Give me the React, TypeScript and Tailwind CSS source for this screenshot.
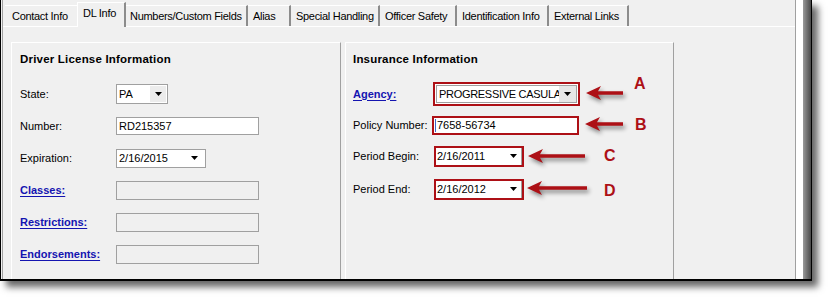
import React from 'react'

const tabs = [
  { label: 'Contact Info', cls: 'w-[72px] pl-[7px]' },
  { label: 'DL Info', cls: 'w-[49px] pl-[5px]', active: true },
  { label: 'Numbers/Custom Fields', cls: 'w-[122px] pl-[4px]' },
  { label: 'Alias', cls: 'w-[43px] pl-[5px]' },
  { label: 'Special Handling', cls: 'w-[89px] pl-[5px]' },
  { label: 'Officer Safety', cls: 'w-[77px] pl-[5px]' },
  { label: 'Identification Info', cls: 'w-[92px] pl-[5px]' },
  { label: 'External Links', cls: 'w-[80px] pl-[5px]' },
]

const DownTriangle = () => (
  <svg width="7" height="4" viewBox="0 0 7 4">
    <path d="M0 0h7L3.5 4z" fill="#000" />
  </svg>
)

// red call-out arrow pointing left
const Arrow = ({ width }: { width: number }) => (
  <svg
    width={width}
    height={14}
    viewBox={`0 0 ${width} 14`}
    className="drop-shadow-[2px_3px_2px_rgba(0,0,0,0.45)] shrink-0"
  >
    <path d={`M0 7 L15 0 L12 5.2 L${width} 5.2 L${width} 8.8 L12 8.8 L15 14 Z`} fill="#ad1016" />
  </svg>
)

const Letter = ({ children, className = '' }: { children: React.ReactNode; className?: string }) => (
  <span className={`text-[16px] leading-[16px] font-bold text-[#ad1016] ${className}`}>{children}</span>
)

const Label = ({ children, link = false, w }: { children: React.ReactNode; link?: boolean; w: string }) => (
  <div className={`${w} shrink-0`}>
    {link ? (
      <span className="font-bold text-[#1414b0] underline underline-offset-[2px]">{children}</span>
    ) : (
      <span>{children}</span>
    )}
  </div>
)

export default function App() {
  return (
    <div className="w-[832px] h-[301px] bg-white overflow-hidden font-['Liberation_Sans',Arial,sans-serif] text-[11px] text-black">
      <div className="w-[812px] h-[281px] flex border-l border-r border-black border-b-2 shadow-[6px_6px_7px_rgba(0,0,0,0.6)]">
        <div className="w-px bg-[#f0f0f0]" />

        {/* tab control */}
        <div className="w-[794px] flex flex-col bg-[#f0f0f0] border-l border-r border-[#a0a0a0]">
          <div className="h-[26px] flex items-start pl-[2px] tracking-[-0.3px]">
            {tabs.map((t) =>
              t.active ? (
                <div
                  key={t.label}
                  className={`${t.cls} h-[25px] mt-[2px] relative z-10 bg-[#f0f0f0] border-l border-t border-white border-r-2 border-r-[#8c8c8c] leading-[20px] whitespace-nowrap`}
                >
                  {t.label}
                </div>
              ) : (
                <div
                  key={t.label}
                  className={`${t.cls} h-[21px] mt-[5px] border-t border-white ${
                    t.label === 'Contact Info' ? '' : 'border-r-2 border-r-[#8c8c8c]'
                  } leading-[20px] whitespace-nowrap overflow-hidden`}
                >
                  {t.label}
                </div>
              )
            )}
          </div>

          <div className="flex-1 border-t border-white flex gap-[4px] pt-[15px] pl-[8px]">
            {/* Driver license */}
            <div className="w-[330px] border-t border-l border-white border-r border-r-[#a0a0a0] flex flex-col pl-[8px]">
              <div className="mt-[9px] h-[14px] leading-[14px] font-bold text-[11.5px] tracking-[0.2px]">Driver License Information</div>
              <div className="mt-[12px] flex flex-col">
                <div className="h-[32px] flex items-center">
                  <Label w="w-[96px]">State:</Label>
                  <div className="w-[52px] h-[20px] border border-[#a0a0a0] bg-white flex items-center">
                    <span className="flex-1 pl-[2px]">PA</span>
                    <div className="w-[16px] h-[16px] mr-px bg-[#ececec] flex items-center justify-center">
                      <DownTriangle />
                    </div>
                  </div>
                </div>
                <div className="h-[32px] flex items-center">
                  <Label w="w-[96px]">Number:</Label>
                  <div className="w-[143px] h-[18px] border border-[#a0a0a0] bg-white pl-[2px] leading-[16px]">RD215357</div>
                </div>
                <div className="h-[32px] flex items-center">
                  <Label w="w-[96px]">Expiration:</Label>
                  <div className="w-[90px] h-[19px] border border-[#a0a0a0] bg-white flex items-center">
                    <span className="flex-1 pl-[2px]">2/16/2015</span>
                    <div className="w-[16px] flex items-center justify-center mr-[3px]">
                      <DownTriangle />
                    </div>
                  </div>
                </div>
                {['Classes:', 'Restrictions:', 'Endorsements:'].map((l) => (
                  <div key={l} className="h-[32px] flex items-center">
                    <Label w="w-[96px]" link>
                      {l}
                    </Label>
                    <div className="w-[143px] h-[19px] border border-[#a0a0a0] bg-[#f0f0f0]" />
                  </div>
                ))}
              </div>
            </div>

            {/* Insurance */}
            <div className="w-[329px] border-t border-l border-white border-r border-r-[#a0a0a0] flex flex-col pl-[7px]">
              <div className="mt-[9px] h-[14px] leading-[14px] font-bold text-[11.5px] tracking-[0.2px]">Insurance Information</div>
              <div className="mt-[12px] flex flex-col">
                <div className="h-[32px] flex items-center">
                  <Label w="w-[80px]" link>
                    Agency:
                  </Label>
                  <div className="w-[147px] h-[24px] border-2 border-[#ad1016] bg-white p-px">
                    <div className="w-full h-full border border-[#a0a0a0] flex items-center">
                      <span className="flex-1 overflow-hidden whitespace-nowrap pl-[2px] tracking-[-0.3px]">PROGRESSIVE CASULA</span>
                      <div className="w-[17px] h-full bg-[#e6e6e6] flex items-center justify-center shrink-0">
                        <DownTriangle />
                      </div>
                    </div>
                  </div>
                  <div className="ml-[6px] mt-[-3px]">
                    <Arrow width={37} />
                  </div>
                  <Letter className="ml-[11px] mb-[20px]">A</Letter>
                </div>

                <div className="h-[30px] flex items-center">
                  <Label w="w-[79px]">Policy Number:</Label>
                  <div className="w-[147px] h-[19px] border-2 border-[#ad1016] bg-white flex items-center leading-[15px]">
                    <div className="w-px h-[13px] bg-[#3a66c8] ml-px" />
                    <span className="pl-px">7658-56734</span>
                  </div>
                  <div className="ml-[6px] mt-[-2px]">
                    <Arrow width={38} />
                  </div>
                  <Letter className="ml-[12px]">B</Letter>
                </div>

                <div className="h-[32px] flex items-center">
                  <Label w="w-[81px]">Period Begin:</Label>
                  <div className="w-[90px] h-[21px] border-2 border-[#ad1016] bg-white flex items-center">
                    <span className="flex-1 pl-[1px]">2/16/2011</span>
                    <div className="w-[16px] h-full flex items-center justify-center border-r border-[#a0a0a0]">
                      <DownTriangle />
                    </div>
                  </div>
                  <div className="ml-[4px]">
                    <Arrow width={57} />
                  </div>
                  <Letter className="ml-[19px]">C</Letter>
                </div>

                <div className="h-[34px] flex items-center">
                  <Label w="w-[81px]">Period End:</Label>
                  <div className="w-[90px] h-[21px] border-2 border-[#ad1016] bg-white flex items-center">
                    <span className="flex-1 pl-[1px]">2/16/2012</span>
                    <div className="w-[16px] h-full flex items-center justify-center border-r border-[#a0a0a0]">
                      <DownTriangle />
                    </div>
                  </div>
                  <div className="ml-[3px] mt-[-2px]">
                    <Arrow width={60} />
                  </div>
                  <Letter className="ml-[17px] mt-[4px]">D</Letter>
                </div>
              </div>
            </div>
          </div>
        </div>

        <div className="w-[7px] bg-white" />
        <div className="w-[8px] bg-linear-to-r from-[#9a9a9a] to-[#4a4a4a]" />
      </div>
    </div>
  )
}
